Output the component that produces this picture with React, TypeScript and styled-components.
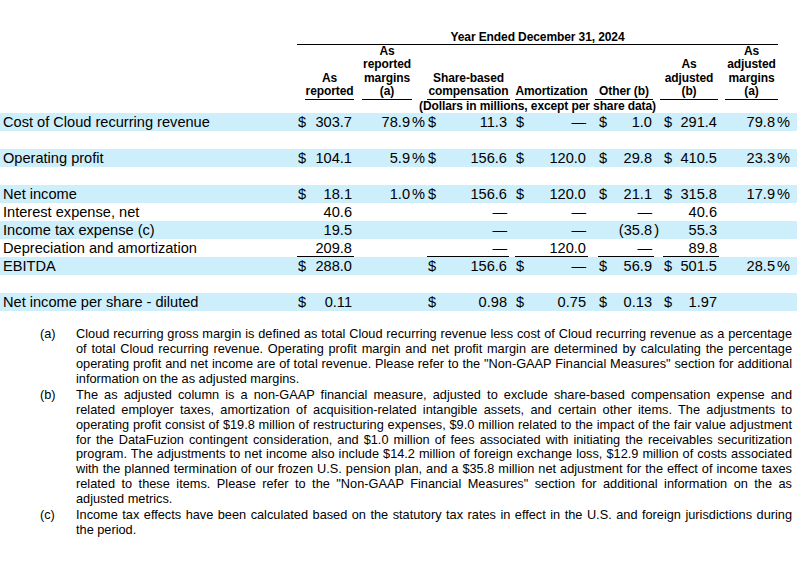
import React from "react";
import styled, { createGlobalStyle } from "styled-components";

const GlobalStyle = createGlobalStyle`
  html, body { margin: 0; padding: 0; background: #ffffff; }
  body { font-family: "Liberation Sans", Arial, sans-serif; color: #000000; }
`;

const COLS = "297px 57px 73px 82px 79px 66px 65px 71px";
const SHADE = "#cdeefb";

const Page = styled.div`
  width: 797px;
  height: 572px;
  padding-top: 30px;
  box-sizing: border-box;
  overflow: hidden;
`;

const Head = styled.div`
  font-weight: bold;
  font-size: 12px;
  letter-spacing: -0.1px;
`;

const Title = styled.div`
  margin-left: 297px;
  width: 481px;
  text-align: center;
  line-height: 14px;
  border-bottom: 1px solid #000;
`;

const HeadRow = styled.div`
  display: grid;
  grid-template-columns: ${COLS};
  align-items: end;
`;

const Spacer = styled.div``;

const HeadCell = styled.div<{ $ml: number; $w: number }>`
  margin-left: ${(p) => p.$ml}px;
  width: ${(p) => p.$w}px;
  text-align: center;
  line-height: 13.4px;
  border-bottom: 1px solid #000;
  white-space: nowrap;
`;

const Units = styled.div`
  margin-left: 297px;
  width: 481px;
  text-align: center;
  line-height: 13px;
`;

const Body = styled.div`
  font-size: 14.6px;
`;

const Row = styled.div<{ $shade?: boolean }>`
  display: grid;
  grid-template-columns: ${COLS};
  height: 18px;
  line-height: 19px;
  background: ${(p) => (p.$shade ? SHADE : "transparent")};
  white-space: nowrap;
`;

const Label = styled.div`
  padding-left: 3px;
`;

const Cell = styled.div`
  display: flex;
  justify-content: flex-end;
`;

const Amount = styled.div<{ $w: number; $rule?: boolean }>`
  width: ${(p) => p.$w}px;
  height: 18px;
  display: flex;
  padding: 0 2px 0 1px;
  box-sizing: border-box;
  box-shadow: ${(p) => (p.$rule ? "0 -1px 0 #000" : "none")};
`;

const Num = styled.span`
  margin-left: auto;
`;

const Hang = styled.span`
  margin-left: 2px;
  margin-right: -7px;
`;

const Pct = styled.div<{ $pr: number }>`
  text-align: right;
  padding-right: ${(p) => p.$pr}px;
`;

const PctSign = styled.span`
  margin-left: 2px;
`;

const Notes = styled.div`
  margin-top: 16.5px;
  font-size: 12.75px;
  line-height: 14.85px;
  padding: 0 5px 0 40px;
  display: flex;
  flex-direction: column;
  gap: 1.6px;
`;

const Note = styled.div`
  display: grid;
  grid-template-columns: 36px 1fr;
`;

const Mark = styled.div``;

const NoteText = styled.div`
  text-align: justify;
`;

type Money = { d?: boolean; v: string; paren?: boolean } | null;
type RowData = {
  label: string;
  shade?: boolean;
  rule?: boolean;
  c1: Money;
  p1?: string;
  c3: Money;
  c4: Money;
  c5: Money;
  c6: Money;
  p2?: string;
} | null;

const DASH = "\u2014";

const rows: RowData[] = [
  { label: "Cost of Cloud recurring revenue", shade: true, c1: { d: true, v: "303.7" }, p1: "78.9", c3: { d: true, v: "11.3" }, c4: { d: true, v: DASH }, c5: { d: true, v: "1.0" }, c6: { d: true, v: "291.4" }, p2: "79.8" },
  null,
  { label: "Operating profit", shade: true, c1: { d: true, v: "104.1" }, p1: "5.9", c3: { d: true, v: "156.6" }, c4: { d: true, v: "120.0" }, c5: { d: true, v: "29.8" }, c6: { d: true, v: "410.5" }, p2: "23.3" },
  null,
  { label: "Net income", shade: true, c1: { d: true, v: "18.1" }, p1: "1.0", c3: { d: true, v: "156.6" }, c4: { d: true, v: "120.0" }, c5: { d: true, v: "21.1" }, c6: { d: true, v: "315.8" }, p2: "17.9" },
  { label: "Interest expense, net", c1: { v: "40.6" }, c3: { v: DASH }, c4: { v: DASH }, c5: { v: DASH }, c6: { v: "40.6" } },
  { label: "Income tax expense (c)", shade: true, c1: { v: "19.5" }, c3: { v: DASH }, c4: { v: DASH }, c5: { v: "35.8", paren: true }, c6: { v: "55.3" } },
  { label: "Depreciation and amortization", c1: { v: "209.8" }, c3: { v: DASH }, c4: { v: "120.0" }, c5: { v: DASH }, c6: { v: "89.8" } },
  { label: "EBITDA", shade: true, rule: true, c1: { d: true, v: "288.0" }, c3: { d: true, v: "156.6" }, c4: { d: true, v: DASH }, c5: { d: true, v: "56.9" }, c6: { d: true, v: "501.5" }, p2: "28.5" },
  null,
  { label: "Net income per share - diluted", shade: true, c1: { d: true, v: "0.11" }, c3: { d: true, v: "0.98" }, c4: { d: true, v: "0.75" }, c5: { d: true, v: "0.13" }, c6: { d: true, v: "1.97" } },
];

const MoneyCell: React.FC<{ m: Money; w: number; rule?: boolean }> = ({ m, w, rule }) => (
  <Cell>
    <Amount $w={w} $rule={rule}>
      {m?.d && <span>$</span>}
      {m && (
        <Num>
          {m.paren ? "(" : ""}
          {m.v}
          {m.paren && <Hang>)</Hang>}
        </Num>
      )}
    </Amount>
  </Cell>
);

const PctCell: React.FC<{ v?: string; pr: number }> = ({ v, pr }) => (
  <Pct $pr={pr}>
    {v && (
      <>
        {v}
        <PctSign>%</PctSign>
      </>
    )}
  </Pct>
);

export default function App() {
  return (
    <Page>
      <GlobalStyle />
      <Head>
        <Title>Year Ended December 31, 2024</Title>
        <HeadRow>
          <Spacer />
          <HeadCell $ml={8} $w={49}>
            As<br />reported
          </HeadCell>
          <HeadCell $ml={8} $w={50}>
            As<br />reported<br />margins<br />(a)
          </HeadCell>
          <HeadCell $ml={0} $w={83}>
            Share-based<br />compensation
          </HeadCell>
          <HeadCell $ml={6} $w={73}>
            Amortization
          </HeadCell>
          <HeadCell $ml={7} $w={58}>
            Other (b)
          </HeadCell>
          <HeadCell $ml={6} $w={58}>
            As<br />adjusted<br />(b)
          </HeadCell>
          <HeadCell $ml={6} $w={53}>
            As<br />adjusted<br />margins<br />(a)
          </HeadCell>
        </HeadRow>
        <Units>(Dollars in millions, except per share data)</Units>
      </Head>
      <Body>
        {rows.map((r, i) =>
          r ? (
            <Row key={i} $shade={r.shade}>
              <Label>{r.label}</Label>
              <MoneyCell m={r.c1} w={57} rule={r.rule} />
              <PctCell v={r.p1} pr={2} />
              <MoneyCell m={r.c3} w={82} rule={r.rule} />
              <MoneyCell m={r.c4} w={73} rule={r.rule} />
              <MoneyCell m={r.c5} w={56} rule={r.rule} />
              <MoneyCell m={r.c6} w={56} rule={r.rule} />
              <PctCell v={r.p2} pr={0} />
            </Row>
          ) : (
            <Row key={i} />
          )
        )}
      </Body>
      <Notes>
        <Note>
          <Mark>(a)</Mark>
          <NoteText>
            Cloud recurring gross margin is defined as total Cloud recurring revenue less cost of Cloud recurring revenue as a percentage of total Cloud recurring revenue. Operating profit margin and net profit margin are determined by calculating the percentage operating profit and net income are of total revenue. Please refer to the "Non-GAAP Financial Measures" section for additional information on the as adjusted margins.
          </NoteText>
        </Note>
        <Note>
          <Mark>(b)</Mark>
          <NoteText>
            The as adjusted column is a non-GAAP financial measure, adjusted to exclude share-based compensation expense and related employer taxes, amortization of acquisition-related intangible assets, and certain other items. The adjustments to operating profit consist of $19.8 million of restructuring expenses, $9.0 million related to the impact of the fair value adjustment for the DataFuzion contingent consideration, and $1.0 million of fees associated with initiating the receivables securitization program. The adjustments to net income also include $14.2 million of foreign exchange loss, $12.9 million of costs associated with the planned termination of our frozen U.S. pension plan, and a $35.8 million net adjustment for the effect of income taxes related to these items. Please refer to the "Non-GAAP Financial Measures" section for additional information on the as adjusted metrics.
          </NoteText>
        </Note>
        <Note>
          <Mark>(c)</Mark>
          <NoteText>
            Income tax effects have been calculated based on the statutory tax rates in effect in the U.S. and foreign jurisdictions during the period.
          </NoteText>
        </Note>
      </Notes>
    </Page>
  );
}
